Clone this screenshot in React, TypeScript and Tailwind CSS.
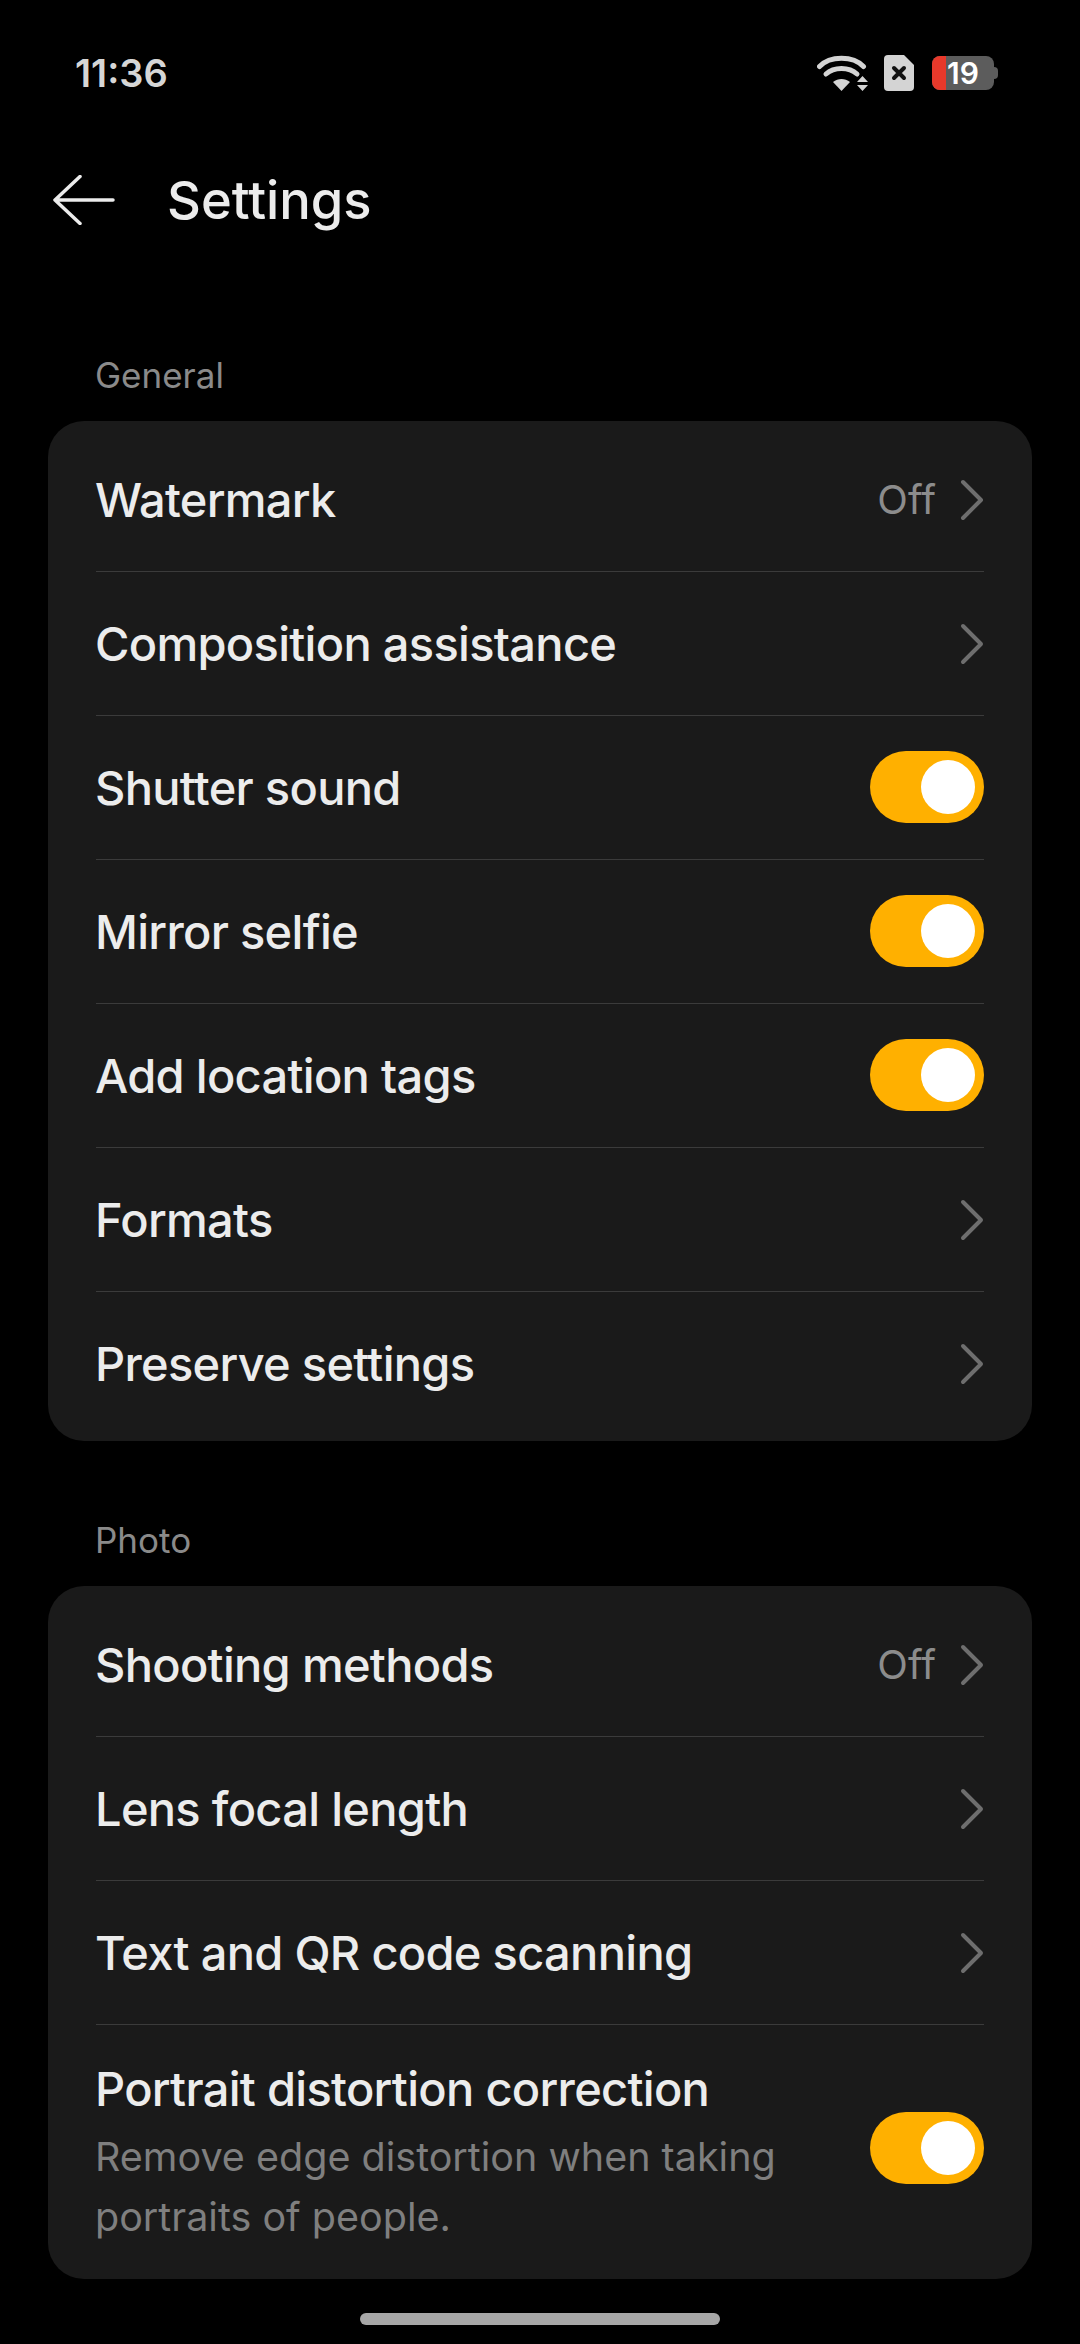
const font = { fontFamily: "Inter, 'Noto Sans', sans-serif" };

const Chevron = () => (
  <svg width="24" height="42" viewBox="0 0 24 42" fill="none" className="shrink-0">
    <path d="M3 3L21 21L3 39" stroke="#6e6e6e" strokeWidth="4" strokeLinecap="round" strokeLinejoin="round" />
  </svg>
);

const Toggle = () => (
  <div className="mb-[2px] w-[114px] h-[72px] rounded-full bg-[#ffb000] flex items-center justify-end pr-[9px] shrink-0">
    <div className="w-[54px] h-[54px] rounded-full bg-white" />
  </div>
);

const Divider = () => <div className="h-px bg-[#3b3b3b]" />;

interface RowProps {
  label: string;
  value?: string;
  toggle?: boolean;
}

const Row = ({ label, value, toggle }: RowProps) => (
  <div className="h-[143px] flex items-center justify-between">
    <span className="-ml-[1px] pt-[2px] text-[47px] font-medium text-[#ececec] tracking-[-0.7px]">{label}</span>
    {toggle ? (
      <Toggle />
    ) : (
      <div className="flex items-center gap-[24px]">
        {value && <span className="text-[40px] text-[#8c8c8c]">{value}</span>}
        <Chevron />
      </div>
    )}
  </div>
);

const Section = ({ title, children }: { title: string; children: React.ReactNode }) => (
  <section>
    <h2 className="h-[46px] pl-[95px] text-[35px] leading-[46px] text-[#8a8a8a]">{title}</h2>
    <div className="mt-[23px] mx-[48px] px-[48px] pt-[7px] pb-[6px] rounded-[36px] bg-[#1a1a1a]">{children}</div>
  </section>
);

const StatusIcons = () => (
  <div className="flex items-center">
    <svg width="51" height="36" viewBox="0 0 51 36" fill="none">
      <path d="M2.500 11.500C13 0.500 36 0.500 46.500 11.500" stroke="#d4d4d4" strokeWidth="5" strokeLinecap="round" />
      <path d="M9 19C17 11.500 32 11.500 40 19" stroke="#d4d4d4" strokeWidth="5" strokeLinecap="round" />
      <path d="M16 27C21 23 28 23 33 27L24.500 36Z" fill="#d4d4d4" />
      <path d="M40 27L45.500 21L51 27Z M40 30H51L45.500 36Z" fill="#d4d4d4" />
    </svg>
    <svg width="30" height="36" viewBox="0 0 30 36" className="ml-[16px]">
      <path d="M4 0H20L30 10V32A4 4 0 0 1 26 36H4A4 4 0 0 1 0 32V4A4 4 0 0 1 4 0Z" fill="#d4d4d4" />
      <path d="M10 13L20 23M20 13L10 23" stroke="#111" strokeWidth="4" strokeLinecap="round" />
    </svg>
    <div className="ml-[18px] flex items-center">
      <div className="relative w-[62px] h-[34px] rounded-[8px] bg-[#5c5c5c]">
        <div className="w-[14px] h-full rounded-l-[8px] bg-[#e8392b]" />
        <span className="absolute inset-0 flex items-center justify-center text-[30px] leading-none font-semibold text-white">19</span>
      </div>
      <div className="w-[4px] h-[12px] rounded-r-full bg-[#5c5c5c]" />
    </div>
  </div>
);

export default function App() {
  return (
    <div style={font} className="relative w-[1080px] h-[2344px] bg-black overflow-hidden">
      <div className="h-[146px] pl-[75px] pr-[82px] flex items-center justify-between">
        <span className="text-[38px] font-semibold text-[#d6d6d6]">11:36</span>
        <StatusIcons />
      </div>
      <header className="h-[108px] flex items-center">
        <svg width="62" height="50" viewBox="0 0 62 50" fill="none" className="ml-[53px]">
          <path d="M2 25H60M27 1.500L2 25L27 48.500" stroke="#ececec" strokeWidth="3.500" strokeLinecap="round" strokeLinejoin="round" />
        </svg>
        <h1 className="ml-[52px] text-[52.5px] font-medium text-[#ececec]">Settings</h1>
      </header>
      <div className="pt-[98px]">
        <Section title="General">
          <Row label="Watermark" value="Off" />
          <Divider />
          <Row label="Composition assistance" />
          <Divider />
          <Row label="Shutter sound" toggle />
          <Divider />
          <Row label="Mirror selfie" toggle />
          <Divider />
          <Row label="Add location tags" toggle />
          <Divider />
          <Row label="Formats" />
          <Divider />
          <Row label="Preserve settings" />
        </Section>
        <div className="h-[76px]" />
        <Section title="Photo">
          <Row label="Shooting methods" value="Off" />
          <Divider />
          <Row label="Lens focal length" />
          <Divider />
          <Row label="Text and QR code scanning" />
          <Divider />
          <div className="h-[248px] flex items-center justify-between gap-[60px]">
            <div className="-ml-[1px] mt-[8px]">
              <div className="text-[47px] leading-[57px] font-medium text-[#ececec] tracking-[-0.7px]">Portrait distortion correction</div>
              <p className="mt-[10px] text-[39.5px] leading-[60px] text-[#7f7f7f]">Remove edge distortion when taking portraits of people.</p>
            </div>
            <Toggle />
          </div>
        </Section>
      </div>
      <div className="absolute left-[360px] top-[2313px] w-[360px] h-[12px] rounded-full bg-[#a6a6a6]" />
    </div>
  );
}
